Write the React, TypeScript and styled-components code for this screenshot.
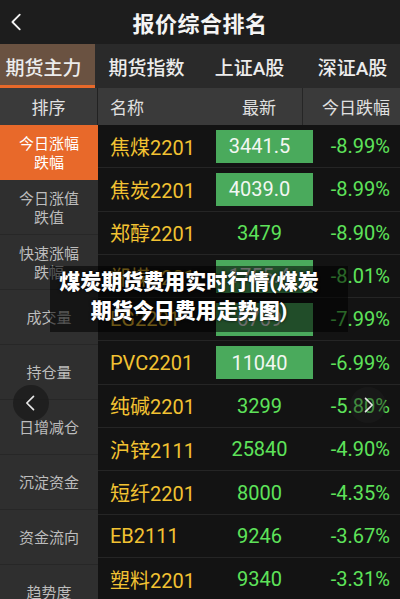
import React from 'react';
import styled, { createGlobalStyle } from 'styled-components';

const GlobalStyle = createGlobalStyle`
  html, body {
    margin: 0;
    padding: 0;
    background: #131313;
  }
  * {
    box-sizing: border-box;
  }
`;

const FONT = `Roboto, "Noto Sans CJK SC", "Noto Sans", sans-serif`;

type Quote = {
  name: string;
  price: string;
  change: string;
  boxed?: boolean;
};

const quotes: Quote[] = [
  { name: '焦煤2201', price: '3441.5', change: '-8.99%', boxed: true },
  { name: '焦炭2201', price: '4039.0', change: '-8.99%', boxed: true },
  { name: '郑醇2201', price: '3479', change: '-8.90%' },
  { name: '郑煤2201', price: '1755.4', change: '-8.01%', boxed: true },
  { name: 'EG2201', price: '6769', change: '-7.99%', boxed: true },
  { name: 'PVC2201', price: '11040', change: '-6.99%', boxed: true },
  { name: '纯碱2201', price: '3299', change: '-5.80%' },
  { name: '沪锌2111', price: '25840', change: '-4.90%' },
  { name: '短纤2201', price: '8000', change: '-4.35%' },
  { name: 'EB2111', price: '9246', change: '-3.67%' },
  { name: '塑料2201', price: '9340', change: '-3.31%' },
];

const sortKeys = [
  ['今日涨幅', '跌幅'],
  ['今日涨值', '跌值'],
  ['快速涨幅', '跌幅'],
  ['成交量'],
  ['持仓量'],
  ['日增减仓'],
  ['沉淀资金'],
  ['资金流向'],
  ['趋势度'],
];

const tabs = ['期货主力', '期货指数', '上证A股', '深证A股'];

const Page = styled.div`
  position: relative;
  width: 400px;
  height: 599px;
  overflow: hidden;
  background: #131313;
  font-family: ${FONT};
`;

const TopBar = styled.div`
  position: relative;
  height: 44px;
  display: flex;
  align-items: center;
  justify-content: center;
  background: #1d1d1d;
`;

const BackButton = styled.div`
  position: absolute;
  left: 6px;
  top: 10px;
  width: 22px;
  height: 24px;
  display: flex;
  align-items: center;
  justify-content: center;
`;

const Title = styled.div`
  color: #f4f4f4;
  font-size: 22px;
  font-weight: 700;
  letter-spacing: 0.5px;
`;

const TabBar = styled.div`
  height: 44px;
  display: flex;
  margin-left: -8px;
  background: #2a2a2a;
`;

const Tab = styled.div<{ $active?: boolean }>`
  flex: none;
  width: 103px;
  display: flex;
  align-items: center;
  justify-content: center;
  padding-top: 3px;
  color: #ececec;
  font-size: 19px;
  font-weight: 500;
  background: ${({ $active }) => ($active ? '#6a5241' : 'transparent')};
  border-bottom: 3px solid ${({ $active }) => ($active ? '#e8692a' : 'transparent')};
`;

const Body = styled.div`
  display: flex;
`;

const Sidebar = styled.div`
  flex: none;
  width: 98px;
  display: flex;
  flex-direction: column;
  background: #2f2f2f;
`;

const SideHead = styled.div`
  height: 37px;
  display: flex;
  align-items: center;
  justify-content: center;
  background: #3a3a3a;
  border-right: 1px solid #222;
  color: #e2e2e2;
  font-size: 17px;
`;

const SideItem = styled.div<{ $active?: boolean }>`
  height: 55px;
  display: flex;
  flex-direction: column;
  align-items: center;
  justify-content: center;
  padding-top: 3px;
  background: ${({ $active }) => ($active ? '#e8692a' : '#2f2f2f')};
  border-bottom: 1px solid ${({ $active }) => ($active ? '#e8692a' : '#272727')};
  color: ${({ $active }) => ($active ? '#ffffff' : '#bdbdbd')};
  font-size: 15px;
  line-height: 19px;
`;

const Table = styled.div`
  flex: 1;
  display: flex;
  flex-direction: column;
`;

const HeadRow = styled.div`
  height: 37px;
  display: grid;
  grid-template-columns: 1fr 86px 98px;
  align-items: stretch;
  padding-left: 12px;
  background: #3a3a3a;
  color: #e0e0e0;
  font-size: 17px;
`;

const HeadCell = styled.div<{ $align: 'left' | 'center' | 'right'; $divider?: boolean }>`
  display: flex;
  align-items: center;
  justify-content: ${({ $align }) =>
    $align === 'left' ? 'flex-start' : $align === 'right' ? 'flex-end' : 'center'};
  padding-right: ${({ $align }) => ($align === 'right' ? '10px' : '0')};
  border-left: ${({ $divider }) => ($divider ? '1px solid #262626' : 'none')};
`;

const Row = styled.div`
  height: 43.3px;
  display: grid;
  grid-template-columns: 1fr 97px 87px;
  align-items: center;
  padding-left: 12px;
  border-bottom: 1px solid #252525;
  background: #131313;
`;

const Name = styled.div`
  color: #f2c232;
  font-size: 20px;
  white-space: nowrap;
`;

const Price = styled.div<{ $boxed?: boolean }>`
  height: 33px;
  display: flex;
  align-items: center;
  justify-content: center;
  padding-right: 10px;
  font-size: 20px;
  color: ${({ $boxed }) => ($boxed ? '#f2f7f2' : '#5ee35a')};
  background: ${({ $boxed }) => ($boxed ? '#4aaa5c' : 'transparent')};
`;

const Change = styled.div`
  text-align: right;
  padding-right: 10px;
  font-size: 20px;
  color: #5ee35a;
  white-space: nowrap;
`;

const Caption = styled.div`
  position: absolute;
  left: 50px;
  top: 266px;
  width: 298px;
  height: 66px;
  padding: 2px 20px 0 0;
  background: rgba(0, 0, 0, 0.55);
  color: #ffffff;
  font-size: 21px;
  font-weight: 900;
  line-height: 29px;
  text-align: center;
  white-space: nowrap;
  text-shadow: 0 0 3px rgba(0, 0, 0, 0.9);
`;

const RoundNav = styled.div<{ $side: 'left' | 'right' }>`
  position: absolute;
  top: ${({ $side }) => ($side === 'left' ? '385px' : '387px')};
  left: ${({ $side }) => ($side === 'left' ? '13px' : '350px')};
  width: 36px;
  height: 36px;
  border-radius: 50%;
  display: flex;
  align-items: center;
  justify-content: center;
  background: ${({ $side }) => ($side === 'left' ? 'rgba(28, 28, 28, 0.85)' : 'rgba(30, 30, 30, 0.45)')};
`;

const Chevron = ({ dir, color, size }: { dir: 'left' | 'right'; color: string; size: number }) => (
  <svg width={size} height={size} viewBox="0 0 24 24" fill="none">
    <path
      d={dir === 'left' ? 'M15 4 L7 12 L15 20' : 'M9 4 L17 12 L9 20'}
      stroke={color}
      strokeWidth={2}
      strokeLinecap="round"
      strokeLinejoin="round"
    />
  </svg>
);

export default function App() {
  return (
    <Page>
      <GlobalStyle />
      <TopBar>
        <BackButton>
          <Chevron dir="left" color="#f2f2f2" size={24} />
        </BackButton>
        <Title>报价综合排名</Title>
      </TopBar>
      <TabBar>
        {tabs.map((tab, i) => (
          <Tab key={tab} $active={i === 0}>
            {tab}
          </Tab>
        ))}
      </TabBar>
      <Body>
        <Sidebar>
          <SideHead>排序</SideHead>
          {sortKeys.map((lines, i) => (
            <SideItem key={lines.join('')} $active={i === 0}>
              {lines.map((line) => (
                <span key={line}>{line}</span>
              ))}
            </SideItem>
          ))}
        </Sidebar>
        <Table>
          <HeadRow>
            <HeadCell $align="left">名称</HeadCell>
            <HeadCell $align="center">最新</HeadCell>
            <HeadCell $align="right" $divider>
              今日跌幅
            </HeadCell>
          </HeadRow>
          {quotes.map((q) => (
            <Row key={q.name}>
              <Name>{q.name}</Name>
              <Price $boxed={q.boxed}>{q.price}</Price>
              <Change>{q.change}</Change>
            </Row>
          ))}
        </Table>
      </Body>
      <Caption>
        煤炭期货费用实时行情(煤炭
        <br />
        期货今日费用走势图)
      </Caption>
      <RoundNav $side="left">
        <Chevron dir="left" color="#e8e8e8" size={20} />
      </RoundNav>
      <RoundNav $side="right">
        <Chevron dir="right" color="#e8e8e8" size={20} />
      </RoundNav>
    </Page>
  );
}
